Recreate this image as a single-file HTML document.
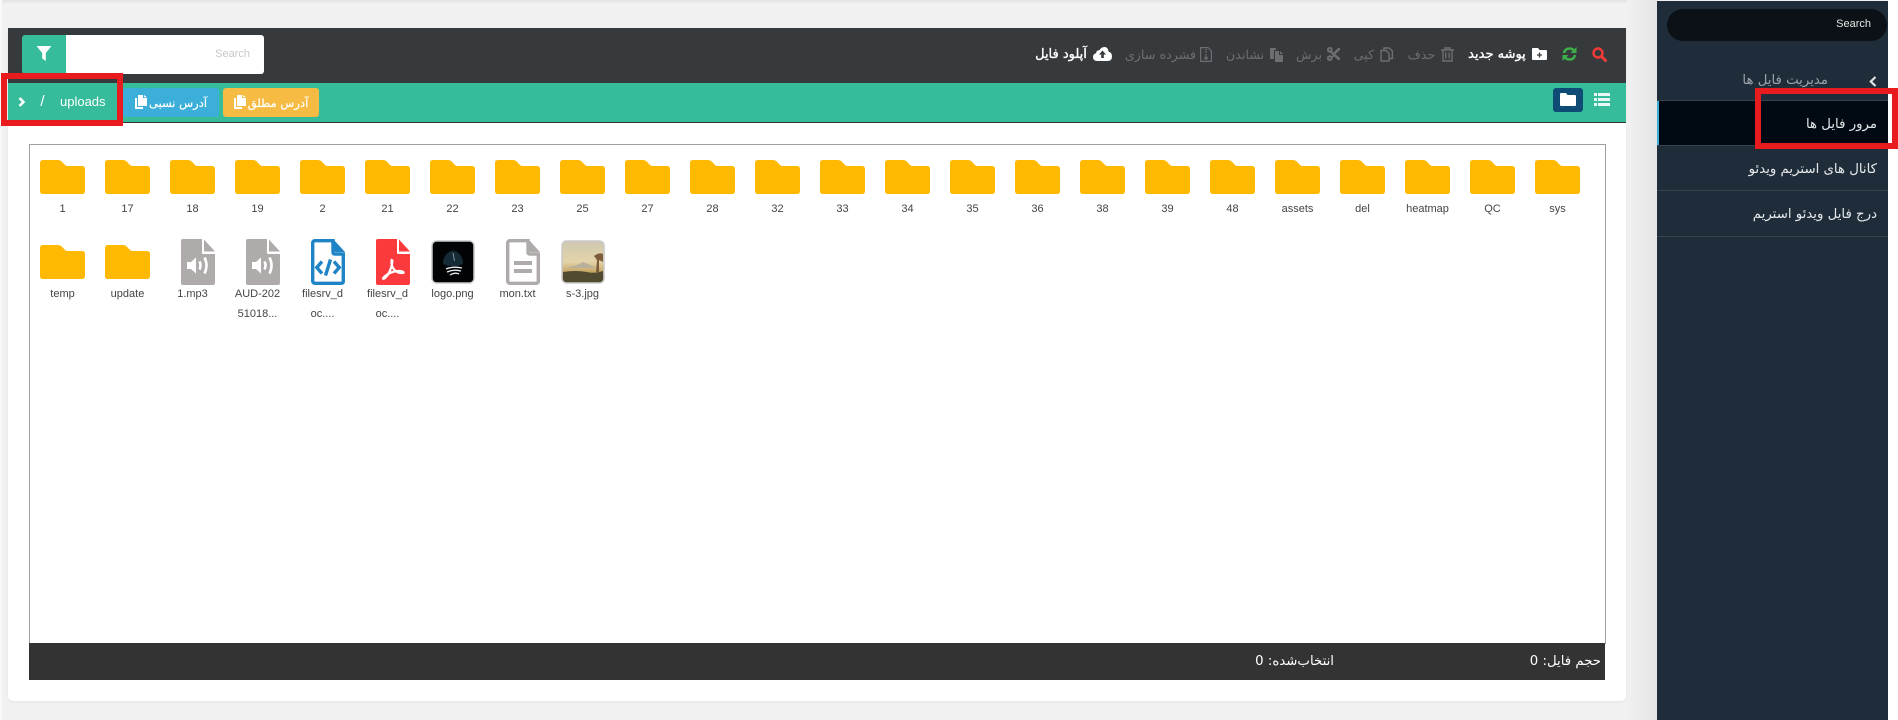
<!DOCTYPE html>
<html lang="fa">
<head>
<meta charset="utf-8">
<title>File Manager</title>
<style>
html,body{margin:0;padding:0;width:1898px;height:720px;overflow:hidden;background:#f1f1f1;font-family:"Liberation Sans","DejaVu Sans",sans-serif;}
.a{position:absolute;}
.t{position:absolute;white-space:nowrap;font-family:"DejaVu Sans","Liberation Sans",sans-serif;line-height:16px;height:16px;}
.tb{font-size:12.700px;color:#6c6f72;top:47px;direction:ltr;text-align:center;}
.w{color:#fff;-webkit-text-stroke:.35px #fff;font-size:13px;}
.l{position:absolute;width:65px;text-align:center;font:11px/14px "Liberation Sans",sans-serif;color:#444;white-space:nowrap;}
.side{font-size:13.300px;color:#e4e8ea;right:21px;direction:rtl;}
svg{display:block;overflow:visible;}
</style>
</head>
<body>
<svg width="0" height="0" style="position:absolute">
<defs>
<symbol id="fld" viewBox="0 0 45 34">
<path fill="#ffb900" d="M3 0H18Q20 0 21.500 1.300L25 5Q26 6 27.500 6H42Q45 6 45 9V31Q45 34 42 34H3Q0 34 0 31V3Q0 0 3 0Z"/>
</symbol>
<symbol id="aud" viewBox="0 0 34 46">
<path fill="#afabaa" d="M2 0H21V14Q21 15 22 15H34V44Q34 46 32 46H2Q0 46 0 44V2Q0 0 2 0Z"/>
<path fill="#afabaa" d="M23 0.500L34 12.500H23Z"/>
<path fill="#fff" d="M6 23H10L15 18.500V34.500L10 30H6Z"/>
<path fill="none" stroke="#fff" stroke-width="2.600" d="M18.500 22.500Q20.500 26.500 18.500 30.500M23.500 18.500Q27.500 26.500 23.500 34.500"/>
</symbol>
</defs>
</svg>

<!-- top shade and sidebar shadow -->
<div class="a" style="left:0;top:0;width:1657px;height:4px;background:linear-gradient(#e2e2e2,#f1f1f1)"></div>
<div class="a" style="left:0;top:0;width:2px;height:720px;background:#f9f9f9"></div>
<div class="a" style="left:1627px;top:0;width:30px;height:720px;background:linear-gradient(90deg,#f1f1f1,#e4e4e4)"></div>

<!-- card -->
<div class="a" style="left:8px;top:28px;width:1618px;height:673px;background:#fff;border-radius:0 0 5px 5px;box-shadow:0 1px 2px rgba(0,0,0,.06)"></div>

<!-- toolbar -->
<div class="a" style="left:8px;top:28px;width:1618px;height:55px;background:#373a3d"></div>
<div class="a" style="left:22px;top:35px;width:44px;height:39px;background:#37bc9b;border-radius:3px 0 0 3px"></div>
<svg class="a" style="left:36px;top:46px" width="16" height="15" viewBox="0 0 16 15"><path fill="#fff" d="M0.500 0H15.500L9.800 7V15L6.200 12.500V7Z"/></svg>
<div class="a" style="left:66px;top:35px;width:198px;height:39px;background:#fff;border-radius:0 3px 3px 0"></div>
<div class="a" style="left:201px;top:47px;width:49px;text-align:right;font-size:11px;line-height:14px;color:#c8c8c8">Search</div>

<!-- toolbar actions -->
<svg class="a" style="left:1592px;top:47px" width="15" height="15" viewBox="0 0 15 15"><circle cx="6" cy="6" r="4.500" fill="none" stroke="#f33a36" stroke-width="2.400"/><path d="M9.500 9.500L13.500 13.500" stroke="#f33a36" stroke-width="3" stroke-linecap="round"/></svg>
<svg class="a" style="left:1562px;top:46px" width="15" height="16" viewBox="0 0 15 16"><path fill="none" stroke="#3fae49" stroke-width="2.600" d="M2 7Q3 2.500 7.500 2.500Q10.500 2.500 12.300 5M13 9Q12 13.500 7.500 13.500Q4.500 13.500 2.700 11"/><path fill="#3fae49" d="M14.500 1V7H8.500ZM0.500 15V9H6.500Z"/></svg>
<svg class="a" style="left:1532px;top:48px" width="15" height="12" viewBox="0 0 15 12"><path fill="#fff" d="M1 0H6L7.500 2H14Q15 2 15 3V11Q15 12 14 12H1Q0 12 0 11V1Q0 0 1 0Z"/><path stroke="#373a3d" stroke-width="1.300" d="M5 7H10M7.500 4.500V9.500"/></svg>
<div class="t tb w" style="left:1457px;width:80px"><span dir="rtl">پوشه جدید</span></div>
<svg class="a" style="left:1441px;top:47px" width="13" height="15" viewBox="0 0 13 15"><path fill="none" stroke="#6c6f72" stroke-width="1.400" d="M0 3H13M4 3V1H9V3M2 3V14H11V3M4.800 5.500V11.500M8.200 5.500V11.500"/></svg>
<div class="t tb" style="left:1402px;width:39px"><span dir="rtl">حذف</span></div>
<svg class="a" style="left:1380px;top:47px" width="13" height="15" viewBox="0 0 13 15"><path fill="none" stroke="#6c6f72" stroke-width="1.400" d="M4 3.500V1H9L12.400 4V11.500H9M1 3.500H6L9 6.500V14H1Z"/></svg>
<div class="t tb" style="left:1344px;width:40px"><span dir="rtl">کپی</span></div>
<svg class="a" style="left:1327px;top:47px" width="13" height="14" viewBox="0 0 13 14"><g fill="none" stroke="#6c6f72" stroke-width="2"><circle cx="2.800" cy="2.800" r="1.900"/><circle cx="2.800" cy="11.200" r="1.900"/></g><path fill="#6c6f72" d="M4 3.500L13 11V13H11L3.500 6ZM13 1V3L8 7.500L6.500 5.500L11 1ZM4 10L6 8L7.300 9.300L5 11Z"/></svg>
<div class="t tb" style="left:1289px;width:40px"><span dir="rtl">برش</span></div>
<svg class="a" style="left:1270px;top:47px" width="13" height="15" viewBox="0 0 13 15"><path fill="#6c6f72" d="M0 1H6V3H4V12H0ZM5 4H9V8H13V15H5ZM10 4L13 7H10Z"/></svg>
<div class="t tb" style="left:1215px;width:60px"><span dir="rtl">نشاندن</span></div>
<svg class="a" style="left:1200px;top:47px" width="12" height="15" viewBox="0 0 12 15"><path fill="none" stroke="#6c6f72" stroke-width="1.200" d="M.6.600H8L11.400 4V14.400H.6Z"/><path stroke="#6c6f72" stroke-width="1.500" d="M6 2V3.500M6 4.500V6M6 7V8.500"/><rect x="4.500" y="9.500" width="3" height="3" fill="#6c6f72"/></svg>
<div class="t tb" style="left:1110px;width:101px"><span dir="rtl">فشرده سازی</span></div>
<svg class="a" style="left:1093px;top:47px" width="19" height="14" viewBox="0 0 19 14"><path fill="#fff" d="M4.500 14Q0 14 0 10Q0 7 3 6.300Q3.500 3 6.500 3.300Q8 0 11.500 0Q15 0 15.500 4.500Q19 5.500 19 9.500Q19 14 14.500 14Z"/><path fill="#373a3d" d="M9.500 3.500L13 7.500H10.800V11H8.200V7.500H6Z"/></svg>
<div class="t tb w" style="left:1021px;width:80px"><span dir="rtl">آپلود فایل</span></div>

<!-- teal bar -->
<div class="a" style="left:8px;top:83px;width:1618px;height:39px;background:#37bc9b;border-bottom:1px solid #333"></div>
<svg class="a" style="left:18px;top:97px" width="8" height="10" viewBox="0 0 8 10"><path fill="none" stroke="#fff" stroke-width="2.500" d="M1.500 1L5.500 5L1.500 9"/></svg>
<div class="a" style="left:38px;top:93px;width:9px;text-align:center;font:15px/17px 'Liberation Sans',sans-serif;color:#fff">/</div>
<div class="a" style="left:60px;top:94px;font:13px/16px 'Liberation Sans',sans-serif;color:#fff">uploads</div>

<div class="a" style="left:123px;top:88px;width:96px;height:29px;background:#3bafda;border-radius:3px"></div>
<svg class="a" style="left:135px;top:95px" width="12" height="14" viewBox="0 0 12 14"><path fill="#fff" d="M3 0H8V3H12V11H3ZM9 0L12 2.300H9Z"/><path fill="#fff" d="M0 3H2V12H8V14H0Z"/></svg>
<div class="t" style="left:138px;top:95px;width:80px;text-align:center;font-size:11.500px;color:#fff;-webkit-text-stroke:.2px #fff"><span dir="rtl">آدرس نسبی</span></div>
<div class="a" style="left:223px;top:88px;width:96px;height:29px;background:#f6bb42;border-radius:3px"></div>
<svg class="a" style="left:234px;top:95px" width="12" height="14" viewBox="0 0 12 14"><path fill="#fff" d="M3 0H8V3H12V11H3ZM9 0L12 2.300H9Z"/><path fill="#fff" d="M0 3H2V12H8V14H0Z"/></svg>
<div class="t" style="left:238px;top:95px;width:80px;text-align:center;font-size:11.500px;color:#fff;-webkit-text-stroke:.2px #fff"><span dir="rtl">آدرس مطلق</span></div>

<div class="a" style="left:1553px;top:88px;width:30px;height:24px;background:#0f4c75;border-radius:3px"></div>
<svg class="a" style="left:1560px;top:93px" width="16" height="13" viewBox="0 0 16 13"><path fill="#fff" d="M1 0H6L7.500 2H15Q16 2 16 3V12Q16 13 15 13H1Q0 13 0 12V1Q0 0 1 0Z"/></svg>
<svg class="a" style="left:1594px;top:93px" width="16" height="13" viewBox="0 0 16 13"><path fill="#e8f8f4" d="M0 0H3V3H0ZM4 0H16V3H4ZM0 5H3V8H0ZM4 5H16V8H4ZM0 10H3V13H0ZM4 10H16V13H4Z"/></svg>

<!-- grid area -->
<div class="a" style="left:29px;top:144px;width:1575px;height:498px;border:1px solid #a0a0a0;background:#fff"></div>

<!-- folders row 1 -->
<svg class="a" style="left:40px;top:160px" width="45" height="34"><use href="#fld"/></svg><div class="l" style="left:30px;top:202px">1</div>
<svg class="a" style="left:105px;top:160px" width="45" height="34"><use href="#fld"/></svg><div class="l" style="left:95px;top:202px">17</div>
<svg class="a" style="left:170px;top:160px" width="45" height="34"><use href="#fld"/></svg><div class="l" style="left:160px;top:202px">18</div>
<svg class="a" style="left:235px;top:160px" width="45" height="34"><use href="#fld"/></svg><div class="l" style="left:225px;top:202px">19</div>
<svg class="a" style="left:300px;top:160px" width="45" height="34"><use href="#fld"/></svg><div class="l" style="left:290px;top:202px">2</div>
<svg class="a" style="left:365px;top:160px" width="45" height="34"><use href="#fld"/></svg><div class="l" style="left:355px;top:202px">21</div>
<svg class="a" style="left:430px;top:160px" width="45" height="34"><use href="#fld"/></svg><div class="l" style="left:420px;top:202px">22</div>
<svg class="a" style="left:495px;top:160px" width="45" height="34"><use href="#fld"/></svg><div class="l" style="left:485px;top:202px">23</div>
<svg class="a" style="left:560px;top:160px" width="45" height="34"><use href="#fld"/></svg><div class="l" style="left:550px;top:202px">25</div>
<svg class="a" style="left:625px;top:160px" width="45" height="34"><use href="#fld"/></svg><div class="l" style="left:615px;top:202px">27</div>
<svg class="a" style="left:690px;top:160px" width="45" height="34"><use href="#fld"/></svg><div class="l" style="left:680px;top:202px">28</div>
<svg class="a" style="left:755px;top:160px" width="45" height="34"><use href="#fld"/></svg><div class="l" style="left:745px;top:202px">32</div>
<svg class="a" style="left:820px;top:160px" width="45" height="34"><use href="#fld"/></svg><div class="l" style="left:810px;top:202px">33</div>
<svg class="a" style="left:885px;top:160px" width="45" height="34"><use href="#fld"/></svg><div class="l" style="left:875px;top:202px">34</div>
<svg class="a" style="left:950px;top:160px" width="45" height="34"><use href="#fld"/></svg><div class="l" style="left:940px;top:202px">35</div>
<svg class="a" style="left:1015px;top:160px" width="45" height="34"><use href="#fld"/></svg><div class="l" style="left:1005px;top:202px">36</div>
<svg class="a" style="left:1080px;top:160px" width="45" height="34"><use href="#fld"/></svg><div class="l" style="left:1070px;top:202px">38</div>
<svg class="a" style="left:1145px;top:160px" width="45" height="34"><use href="#fld"/></svg><div class="l" style="left:1135px;top:202px">39</div>
<svg class="a" style="left:1210px;top:160px" width="45" height="34"><use href="#fld"/></svg><div class="l" style="left:1200px;top:202px">48</div>
<svg class="a" style="left:1275px;top:160px" width="45" height="34"><use href="#fld"/></svg><div class="l" style="left:1265px;top:202px">assets</div>
<svg class="a" style="left:1340px;top:160px" width="45" height="34"><use href="#fld"/></svg><div class="l" style="left:1330px;top:202px">del</div>
<svg class="a" style="left:1405px;top:160px" width="45" height="34"><use href="#fld"/></svg><div class="l" style="left:1395px;top:202px">heatmap</div>
<svg class="a" style="left:1470px;top:160px" width="45" height="34"><use href="#fld"/></svg><div class="l" style="left:1460px;top:202px">QC</div>
<svg class="a" style="left:1535px;top:160px" width="45" height="34"><use href="#fld"/></svg><div class="l" style="left:1525px;top:202px">sys</div>

<!-- row 2 -->
<svg class="a" style="left:40px;top:245px" width="45" height="34"><use href="#fld"/></svg><div class="l" style="left:30px;top:287px">temp</div>
<svg class="a" style="left:105px;top:245px" width="45" height="34"><use href="#fld"/></svg><div class="l" style="left:95px;top:287px">update</div>

<svg class="a" style="left:181px;top:239px" width="34" height="46"><use href="#aud"/></svg><div class="l" style="left:160px;top:287px">1.mp3</div>
<svg class="a" style="left:246px;top:239px" width="34" height="46"><use href="#aud"/></svg><div class="l" style="left:225px;top:287px">AUD-202<br><span style="display:block;margin-top:6px">51018...</span></div>

<svg class="a" style="left:311px;top:239px" width="34" height="46" viewBox="0 0 34 46"><path fill="none" stroke="#1f84c6" stroke-width="3.400" d="M4 1.700H22V13Q22 15 24 15H32.300V42Q32.300 44.300 30 44.300H4Q1.700 44.300 1.700 42V4Q1.700 1.700 4 1.700Z"/><path fill="#1f84c6" d="M23 1L34 13H25Q23 13 23 11Z"/><path fill="none" stroke="#1f84c6" stroke-width="3.400" d="M11 22.500L5.800 28.500L11 34.500M23 22.500L28.200 28.500L23 34.500M19.500 20.500L14.500 36.500"/></svg>
<div class="l" style="left:290px;top:287px">filesrv_d<br><span style="display:block;margin-top:6px">oc....</span></div>

<svg class="a" style="left:376px;top:239px" width="34" height="46" viewBox="0 0 34 46"><path fill="#fa3a3c" d="M2 0H21V14Q21 15 22 15H34V44Q34 46 32 46H2Q0 46 0 44V2Q0 0 2 0Z"/><path fill="#fa3a3c" d="M23 .5L34 12.500H23Z"/><path fill="none" stroke="#fff" stroke-width="2.200" d="M16 20Q14.500 24 17 29Q20 34 26 34Q29 34 26.500 32.500Q21 31 14 34Q8 37 7 39.500Q8 41 12 35.500Q16 29 16.500 21"/></svg>
<div class="l" style="left:355px;top:287px">filesrv_d<br><span style="display:block;margin-top:6px">oc....</span></div>

<svg class="a" style="left:431px;top:240px" width="44" height="44" viewBox="0 0 44 44"><rect x="1" y="1" width="42" height="42" rx="4.500" fill="#010305" stroke="#c9c9c9" stroke-width="1.500"/><path fill="#142a35" d="M12 24Q12 13 22 10.500Q32 13 32 24L27 26H17Z"/><path stroke="#7f95a0" stroke-width="1" d="M22 13L23.500 21"/><path fill="none" stroke="#e8eef0" stroke-width="1.300" d="M15 29Q22 26 31 28M16 32Q23 29 30 31M19 35Q24 32 28 34"/></svg>
<div class="l" style="left:420px;top:287px">logo.png</div>

<svg class="a" style="left:506px;top:239px" width="34" height="46" viewBox="0 0 34 46"><path fill="none" stroke="#afabaa" stroke-width="3.400" d="M4 1.700H22V13Q22 15 24 15H32.300V42Q32.300 44.300 30 44.300H4Q1.700 44.300 1.700 42V4Q1.700 1.700 4 1.700Z"/><path fill="#afabaa" d="M23 1L34 13H25Q23 13 23 11Z"/><path stroke="#afabaa" stroke-width="4" d="M8 24H26M8 32H26"/></svg>
<div class="l" style="left:485px;top:287px">mon.txt</div>

<svg class="a" style="left:561px;top:240px" width="44" height="44" viewBox="0 0 44 44"><defs><linearGradient id="sk" x1="0" y1="0" x2="0" y2="1"><stop offset="0" stop-color="#cfc9b2"/><stop offset=".5" stop-color="#e3d3a8"/><stop offset=".72" stop-color="#c9a968"/><stop offset="1" stop-color="#5d5a3e"/></linearGradient></defs><rect x="1" y="1" width="42" height="42" rx="4.500" fill="url(#sk)" stroke="#c9c9c9" stroke-width="1.500"/><path fill="#b8b09a" d="M4 28Q16 26 22 22Q27 24 36 28Z"/><path fill="#4f4a30" d="M2 32Q14 30 26 32Q32 34 42 31V38Q42 42 38 42H6Q2 42 2 38Z"/><path fill="#7c5c3a" d="M33 16Q38 12 42 14V22L38 20L38 32H35L36 20Z"/></svg>
<div class="l" style="left:550px;top:287px">s-3.jpg</div>

<!-- footer -->
<div class="a" style="left:29px;top:643px;width:1576px;height:37px;background:#333"></div>
<div class="t" style="left:1501px;top:654px;width:100px;text-align:right;font-size:13.300px;color:#fff;direction:rtl">حجم فایل: 0</div>
<div class="t" style="left:1234px;top:654px;width:100px;text-align:right;font-size:13.300px;color:#fff;direction:rtl">انتخاب‌شده: 0</div>

<!-- sidebar -->
<div class="a" style="left:1657px;top:1px;width:231px;height:719px;background:#1f2d3a"></div>
<div class="a" style="left:1888px;top:0;width:10px;height:720px;background:#fff"></div>
<div class="a" style="left:1667px;top:9px;width:220px;height:32px;background:#0b1116;border-radius:16px"></div>
<div class="a" style="left:1800px;top:17px;width:71px;text-align:right;font-size:11px;line-height:14px;color:#e6e6e6">Search</div>

<div class="t" style="left:1706px;top:73px;width:122px;text-align:right;font-size:13.300px;color:#9aa3aa;direction:rtl">مدیریت فایل ها</div>
<svg class="a" style="left:1869px;top:76px" width="8" height="11" viewBox="0 0 8 11"><path fill="none" stroke="#dfe3e6" stroke-width="2.200" d="M6.500 1L1.800 5.500L6.500 10"/></svg>
<div class="a" style="left:1657px;top:100px;width:231px;height:1px;background:#35434f"></div>
<div class="a" style="left:1657px;top:101px;width:231px;height:44px;background:#010a12"></div>
<div class="a" style="left:1657px;top:101px;width:2px;height:44px;background:#3bafda"></div>
<div class="a" style="left:1657px;top:145px;width:231px;height:1px;background:#35434f"></div>
<div class="a" style="left:1657px;top:190px;width:231px;height:1px;background:#35434f"></div>
<div class="a" style="left:1657px;top:236px;width:231px;height:1px;background:#35434f"></div>
<div class="t side" style="top:117px">مرور فایل ها</div>
<div class="t side" style="top:162px">کانال های استریم ویدئو</div>
<div class="t side" style="top:207px">درج فایل ویدئو استریم</div>

<!-- red annotation boxes -->
<div class="a" style="left:1px;top:73px;width:110px;height:41px;border:6px solid #e81c1f"></div>
<div class="a" style="left:1755px;top:88px;width:131px;height:49px;border:6px solid #e81c1f"></div>
</body>
</html>
